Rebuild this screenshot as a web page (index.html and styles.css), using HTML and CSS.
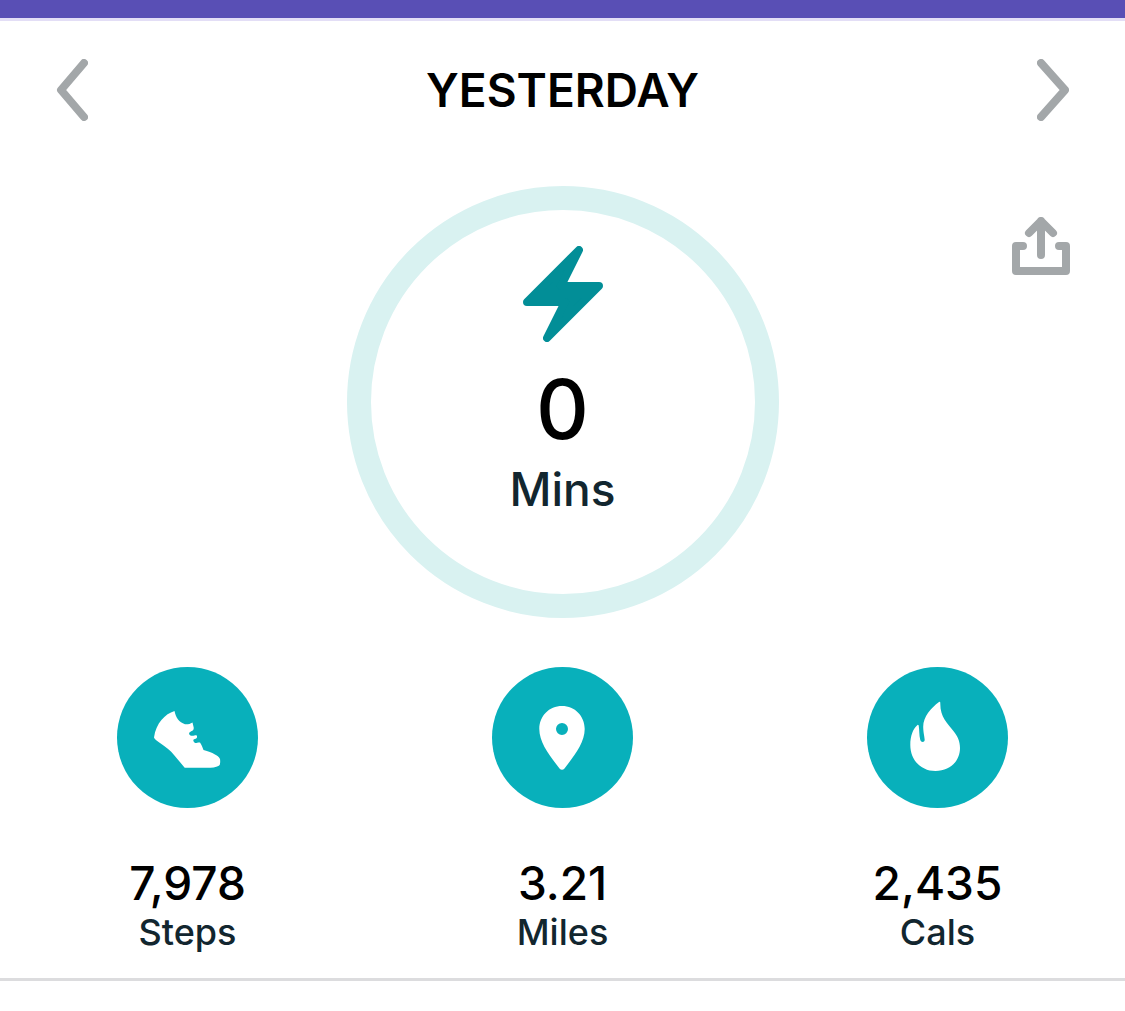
FILE: index.html
```html
<!DOCTYPE html>
<html lang="en">
<head>
  <meta charset="UTF-8" />
  <title>Activity</title>
  <meta name="viewport" content="width=device-width, initial-scale=1" />
  <link rel="stylesheet" href="styles.css">
</head>
<body>
  <div class="topbar"></div>

  <!-- Day switcher -->
  <header class="day-nav">
    <button class="icon-btn" type="button" aria-label="Previous day">
      <svg width="32" height="62" viewBox="0 0 32 62"><path d="M28 4L5 31L28 58" /></svg>
    </button>
    <h1>YESTERDAY</h1>
    <button class="icon-btn" type="button" aria-label="Next day">
      <svg width="32" height="62" viewBox="0 0 32 62"><path d="M4 4L28 31L4 58" /></svg>
    </button>
  </header>

  <main>
    <!-- Active minutes ring -->
    <section class="hero">
      <div class="ring">
        <svg class="bolt" width="80" height="96" viewBox="0 0 80 96"><path d="M56 4L38 40H76L24 92L42 56H4Z" /></svg>
        <div class="ring-value">0</div>
        <div class="ring-label">Mins</div>
      </div>
      <button class="icon-btn share" type="button" aria-label="Share">
        <svg width="60" height="58" viewBox="0 0 60 58"><path d="M12 29H5V54H55V29H48M30 4V38M18 16L30 4L42 16" /></svg>
      </button>
    </section>

    <section class="stats">
      <div class="stat">
        <div class="badge">
          <svg viewBox="0 0 141 141">
            <path d="M57.500 44C48 47 39 56 37 70.500C38 74 50 79 57 88L67.700 100.700H93.500C98 100.500 101.500 99.500 102.700 98C103.300 96 103.300 94 103 92C101 88 96 86 86.500 83C85.500 80 84.500 78 83 75.500C80.500 75.200 79 76.500 77.700 75.700C76 74.500 76 73 77 72.300C78.500 71.500 80.300 71.500 80 69.500C79.800 67 77 69.500 74 68.700C71.800 67.500 71.500 66 73 65C74.500 64 77 64 76.700 60.500L75.500 55.500C73 57 71 57.500 68 57.300C62 55 59 51 57.500 44Z" />
          </svg>
        </div>
        <div class="stat-value">7,978</div>
        <div class="stat-label">Steps</div>
      </div>
      <div class="stat">
        <div class="badge">
          <svg viewBox="0 0 141 141">
            <path fill-rule="evenodd" d="M70 39C57 39 47.300 49 47.300 62C47.300 76 58 89 67.500 101.500C69 103.300 71 103.300 72.500 101.500C82 89 92.700 76 92.700 62C92.700 49 83 39 70 39ZM70 56A6 6 0 1 1 70 68A6 6 0 1 1 70 56Z" />
          </svg>
        </div>
        <div class="stat-value">3.21</div>
        <div class="stat-label">Miles</div>
      </div>
      <div class="stat">
        <div class="badge">
          <svg viewBox="0 0 141 141">
            <path d="M72 35C64 41 56 50 56.200 60C56.300 66 57.500 69 57.700 73C57.500 75.500 54 75.500 53.300 73C52 68 52.500 63 51.700 58.500Q51 57 50 58.500C46 62 43.300 69 43.300 78C43.300 93 54 104 68.500 104C83 104 93 94 93 81C93 74 90.500 69 87 64.700C80 56 73 50 73.300 36Q73.300 34.300 72 35Z" />
          </svg>
        </div>
        <div class="stat-value">2,435</div>
        <div class="stat-label">Cals</div>
      </div>
    </section>
  </main>
</body>
</html>
```

FILE: styles.css
```css
* { box-sizing: border-box; }

body {
  margin: 0;
  background: #fff;
  color: #000;
  font-family: Inter, "Liberation Sans", sans-serif;
  font-weight: 500;
}

svg { display: block; }

.topbar {
  height: 21px;
  background: #594fb5;
  border-bottom: 3px solid #e3def6;
}

.icon-btn {
  padding: 0;
  background: none;
  border: none;
  cursor: pointer;
}

.icon-btn path {
  fill: none;
  stroke: #a3a7a9;
  stroke-width: 8;
  stroke-linecap: round;
  stroke-linejoin: round;
}

.day-nav {
  display: flex;
  align-items: center;
  justify-content: space-between;
  padding: 38px 56px;
}

.day-nav h1 {
  margin: 0;
  font-size: 46px;
  line-height: 58px;
  font-weight: 600;
}

main {
  padding: 27px 0 25px;
  border-bottom: 3px solid #dcdcde;
}

.hero {
  display: grid;
  grid-template-columns: 1fr auto 1fr;
  padding: 0 54px;
}

.ring {
  grid-column: 2;
  display: flex;
  flex-direction: column;
  align-items: center;
  width: 432px;
  height: 432px;
  padding-top: 36px;
  border: 24px solid #d9f2f1;
  border-radius: 50%;
}

.bolt path {
  fill: #028e97;
  stroke: #028e97;
  stroke-width: 8;
  stroke-linejoin: round;
}

.ring-value {
  margin-top: 26px;
  font-size: 82px;
  line-height: 84px;
}

.ring-label {
  margin-top: 8px;
  font-size: 46px;
  line-height: 58px;
  color: #12262f;
}

.share {
  align-self: start;
  justify-self: end;
  margin-top: 31px;
}

.stats {
  display: grid;
  grid-template-columns: repeat(3, 1fr);
  margin-top: 49px;
}

.stat {
  display: flex;
  flex-direction: column;
  align-items: center;
}

.badge {
  width: 141px;
  height: 141px;
  background: #08b0bb;
  border-radius: 50%;
}

.badge path { fill: #fff; }

.stat-value {
  margin-top: 47px;
  font-size: 46px;
  line-height: 56px;
}

.stat-label {
  font-size: 36px;
  line-height: 42px;
  color: #12262f;
}
```
